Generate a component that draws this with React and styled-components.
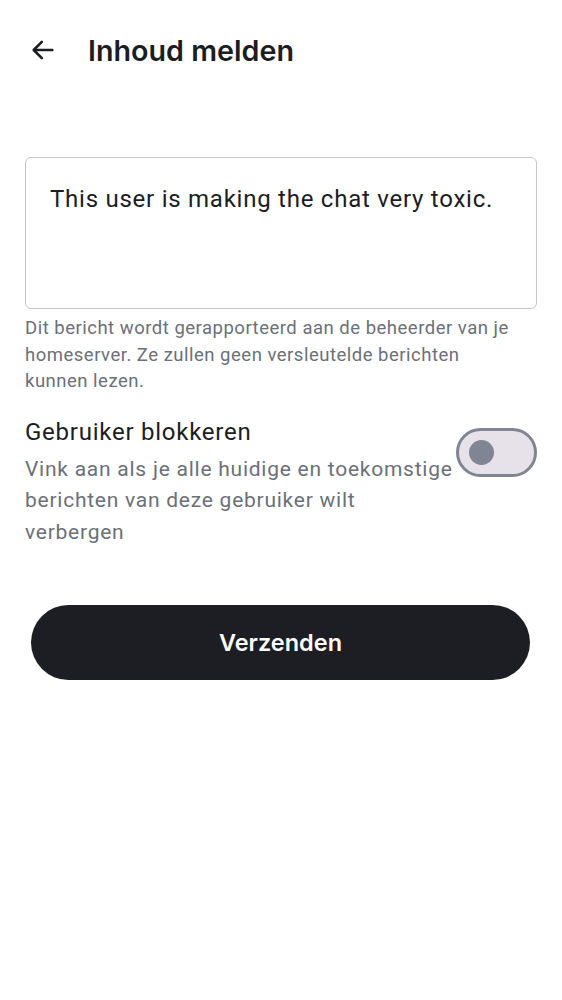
import React from "react";
import styled, { createGlobalStyle } from "styled-components";

const GlobalStyle = createGlobalStyle`
  body {
    margin: 0;
    background: #ffffff;
    font-family: Roboto, "Liberation Sans", sans-serif;
  }
`;

const Page = styled.div`
  width: 562px;
  min-height: 1000px;
  display: flex;
  flex-direction: column;
  background: #fff;
`;

const TopBar = styled.div`
  display: flex;
  align-items: center;
  height: 100px;
  padding: 0 0 0 29px;
  gap: 31px;
`;

const BackButton = styled.button`
  width: 28px;
  height: 28px;
  padding: 0;
  border: none;
  background: none;
  display: flex;
  align-items: center;
  justify-content: center;
  color: #1b1d22;
`;

const Title = styled.h1`
  margin: 0;
  font-family: Inter, "Liberation Sans", sans-serif;
  font-weight: 600;
  font-size: 28.7px;
  color: #1b1d22;
`;

const Content = styled.div`
  display: flex;
  flex-direction: column;
  padding: 57px 25px 0 25px;
`;

const TextBox = styled.div`
  height: 152px;
  box-sizing: border-box;
  border: 1.5px solid #c3c7cf;
  border-radius: 6px;
  padding: 27px 24px;
  font-size: 24px;
  line-height: 28px;
  letter-spacing: 0.75px;
  color: #1b1d22;
`;

const Hint = styled.p`
  margin: 6px 0 0 0;
  padding-right: 24px;
  font-size: 18.5px;
  line-height: 26.5px;
  letter-spacing: 0.5px;
  color: #6b7079;
`;

const ToggleRow = styled.div`
  display: flex;
  align-items: flex-start;
  justify-content: space-between;
  margin-top: 19px;
`;

const ToggleText = styled.div`
  display: flex;
  flex-direction: column;
  flex: 1;
  min-width: 0;
`;

const ToggleLabel = styled.div`
  font-size: 24px;
  line-height: 36px;
  letter-spacing: 0.75px;
  color: #1b1d22;
`;

const ToggleDesc = styled.div`
  margin-top: 4px;
  font-size: 21px;
  line-height: 31.5px;
  letter-spacing: 0.75px;
  color: #6b7079;
`;

const Switch = styled.div`
  width: 81px;
  height: 49px;
  box-sizing: border-box;
  margin-top: 14px;
  border: 3px solid #7f8592;
  border-radius: 25px;
  background: #e7e2e9;
  display: flex;
  align-items: center;
  padding-left: 10px;
  flex-shrink: 0;
`;

const Thumb = styled.div`
  width: 25px;
  height: 25px;
  border-radius: 50%;
  background: #7f8592;
`;

const SubmitButton = styled.button`
  margin: 57px 7px 0 6px;
  height: 75px;
  border: none;
  border-radius: 38px;
  background: #1c1e23;
  color: #fff;
  font-family: Inter, "Liberation Sans", sans-serif;
  font-weight: 600;
  font-size: 23.5px;
`;

export default function App() {
  return (
    <>
      <GlobalStyle />
      <Page>
        <TopBar>
          <BackButton>
            <svg width="28" height="28" viewBox="0 0 24 24" fill="none">
              <path
                d="M20 12H4.5M11 5l-7 7 7 7"
                stroke="currentColor"
                strokeWidth="2.2"
                strokeLinecap="round"
                strokeLinejoin="round"
              />
            </svg>
          </BackButton>
          <Title>Inhoud melden</Title>
        </TopBar>
        <Content>
          <TextBox>This user is making the chat very toxic.</TextBox>
          <Hint>
            Dit bericht wordt gerapporteerd aan de beheerder van je
            homeserver. Ze zullen geen versleutelde berichten kunnen lezen.
          </Hint>
          <ToggleRow>
            <ToggleText>
              <ToggleLabel>Gebruiker blokkeren</ToggleLabel>
              <ToggleDesc>
                Vink aan als je alle huidige en toekomstige berichten van deze
                gebruiker wilt verbergen
              </ToggleDesc>
            </ToggleText>
            <Switch>
              <Thumb />
            </Switch>
          </ToggleRow>
          <SubmitButton>Verzenden</SubmitButton>
        </Content>
      </Page>
    </>
  );
}
